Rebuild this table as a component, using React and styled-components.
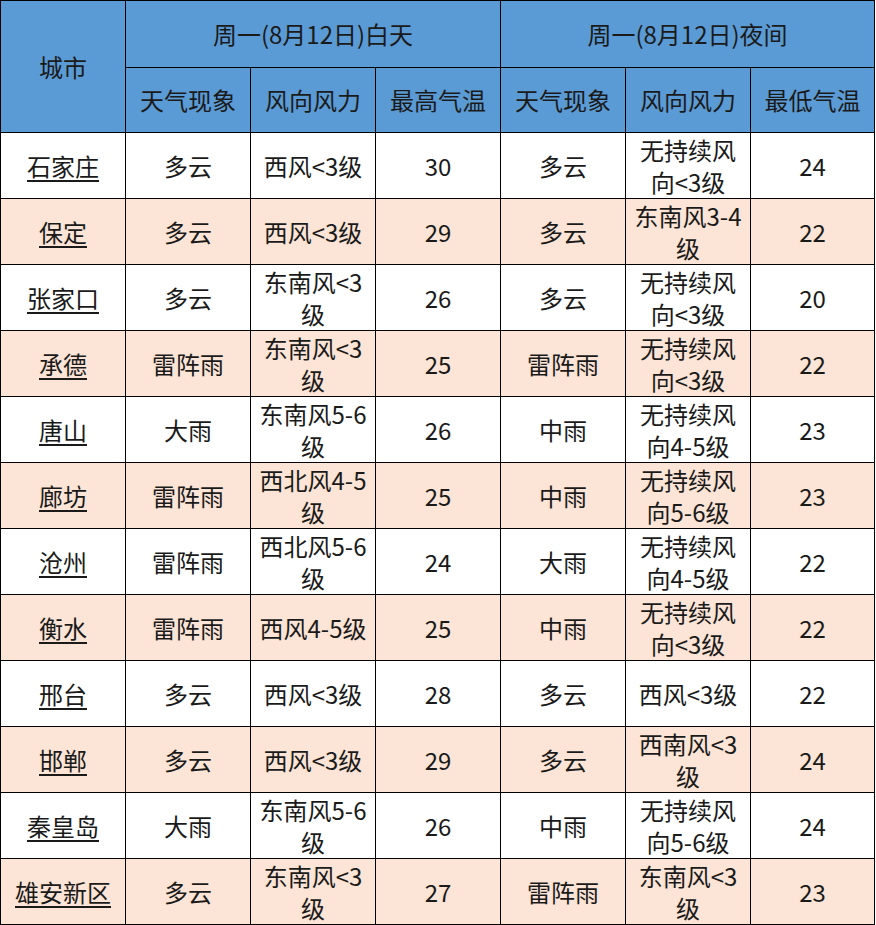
import styled, { createGlobalStyle } from "styled-components";

const GlobalStyle = createGlobalStyle`
  body {
    margin: 0;
    background: #ffffff;
    font-family: "Noto Sans CJK SC", "Noto Sans", sans-serif;
  }
`;

const Table = styled.table`
  border-collapse: collapse;
  table-layout: fixed;
  width: 875px;
  font-size: 24px;
  color: #1a1a1a;
`;

const HeadCell = styled.th`
  background: #5b9bd5;
  border: 1px solid #000;
  font-weight: 400;
  padding: 0 5px;
  text-align: center;
  vertical-align: middle;
  line-height: 32px;
`;

const HeadRow = styled.tr`
  height: ${(p) => p.$h}px;
`;

const BodyRow = styled.tr`
  height: 66px;
  background: ${(p) => (p.$alt ? "#fce4d6" : "#ffffff")};
`;

const Cell = styled.td`
  border: 1px solid #000;
  padding: 0 5px;
  text-align: center;
  vertical-align: middle;
  line-height: 32px;
  word-break: break-all;
`;

const CityLink = styled.a`
  color: #1a1a1a;
  text-decoration: underline;
  text-underline-offset: 4px;
`;

const widths = [125, 125, 125, 125, 125, 125, 124];

const rows = [
  ["石家庄", "多云", "西风<3级", "30", "多云", "无持续风向<3级", "24"],
  ["保定", "多云", "西风<3级", "29", "多云", "东南风3-4级", "22"],
  ["张家口", "多云", "东南风<3级", "26", "多云", "无持续风向<3级", "20"],
  ["承德", "雷阵雨", "东南风<3级", "25", "雷阵雨", "无持续风向<3级", "22"],
  ["唐山", "大雨", "东南风5-6级", "26", "中雨", "无持续风向4-5级", "23"],
  ["廊坊", "雷阵雨", "西北风4-5级", "25", "中雨", "无持续风向5-6级", "23"],
  ["沧州", "雷阵雨", "西北风5-6级", "24", "大雨", "无持续风向4-5级", "22"],
  ["衡水", "雷阵雨", "西风4-5级", "25", "中雨", "无持续风向<3级", "22"],
  ["邢台", "多云", "西风<3级", "28", "多云", "西风<3级", "22"],
  ["邯郸", "多云", "西风<3级", "29", "多云", "西南风<3级", "24"],
  ["秦皇岛", "大雨", "东南风5-6级", "26", "中雨", "无持续风向5-6级", "24"],
  ["雄安新区", "多云", "东南风<3级", "27", "雷阵雨", "东南风<3级", "23"],
];

export default function App() {
  return (
    <>
      <GlobalStyle />
      <Table>
        <colgroup>
          {widths.map((w, i) => (
            <col key={i} style={{ width: w }} />
          ))}
        </colgroup>
        <thead>
          <HeadRow $h={67}>
            <HeadCell rowSpan={2}>城市</HeadCell>
            <HeadCell colSpan={3}>周一(8月12日)白天</HeadCell>
            <HeadCell colSpan={3}>周一(8月12日)夜间</HeadCell>
          </HeadRow>
          <HeadRow $h={65}>
            <HeadCell>天气现象</HeadCell>
            <HeadCell>风向风力</HeadCell>
            <HeadCell>最高气温</HeadCell>
            <HeadCell>天气现象</HeadCell>
            <HeadCell>风向风力</HeadCell>
            <HeadCell>最低气温</HeadCell>
          </HeadRow>
        </thead>
        <tbody>
          {rows.map((r, i) => (
            <BodyRow key={r[0]} $alt={i % 2 === 1}>
              <Cell>
                <CityLink href="#">{r[0]}</CityLink>
              </Cell>
              {r.slice(1).map((v, j) => (
                <Cell key={j}>{v}</Cell>
              ))}
            </BodyRow>
          ))}
        </tbody>
      </Table>
    </>
  );
}
